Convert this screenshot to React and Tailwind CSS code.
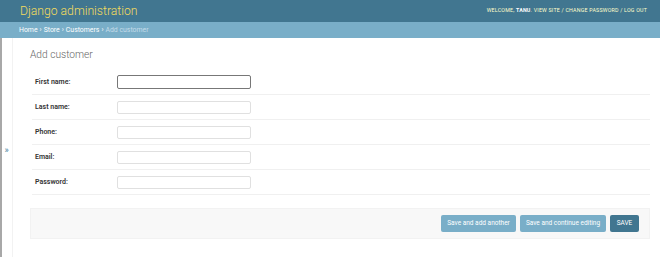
const fields = ["First name:", "Last name:", "Phone:", "Email:", "Password:"];

export default function App() {
  return (
    <div className="w-[660px] h-[257px] bg-white overflow-hidden font-['Roboto','Liberation_Sans',sans-serif] flex flex-col">
      <header className="h-[22px] shrink-0 bg-[#417690] flex items-center justify-between pl-[20px] pr-[13px]">
        <h1 className="text-[12.2px] font-light text-[#f5dd5d] leading-none">
          Django administration
        </h1>
        <div className="text-[5.3px] tracking-[0.2px] uppercase text-[#ffffcc] leading-none">
          Welcome, <strong className="font-bold text-white">Tanu</strong>.{" "}
          <span>View site</span> / <span>Change password</span> / <span>Log out</span>
        </div>
      </header>

      <div className="h-[16px] shrink-0 bg-[#79aec8] flex items-center pl-[19px] text-[6.9px] text-white leading-none">
        <span>Home</span>
        <span className="mx-[2px]">›</span>
        <span>Store</span>
        <span className="mx-[2px]">›</span>
        <span>Customers</span>
        <span className="mx-[2px]">›</span>
        <span className="text-[#c4dce8]">Add customer</span>
      </div>

      <div className="flex flex-1">
        <div className="w-[2px] bg-[#a8a8a8] shrink-0" />
        <div className="w-[11px] shrink-0 border-r border-[#f2f2f2] flex items-center justify-center pt-[7px] pr-[1px] text-[9px] text-[#447e9b]">
          »
        </div>

        <main className="flex-1 pl-[17px] pr-[10px]">
          <h2 className="text-[10.2px] font-light text-[#666] mt-[10px] mb-[8px] leading-[14px]">
            Add customer
          </h2>

          <div className="flex flex-col pl-[2px]">
            {fields.map((label, i) => (
              <div
                key={label}
                className="h-[25px] flex items-center border-b border-[#f0f0f0] pl-[3px]"
              >
                <label className="w-[82px] text-[7px] font-semibold text-[#333]">
                  {label}
                </label>
                <input
                  className={
                    i === 0
                      ? "w-[134px] h-[14px] rounded-[2px] border-[1.5px] border-[#777] bg-white outline-none"
                      : "w-[134px] h-[13px] rounded-[2px] border border-[#e0e0e0] bg-white outline-none"
                  }
                />
              </div>
            ))}
          </div>

          <div className="mt-[13px] h-[31px] bg-[#f8f8f8] border border-[#f2f2f2] flex items-center justify-end gap-[4px] pr-[10px]">
            <button className="h-[17px] w-[75px] rounded-[2px] bg-[#79aec8] text-white text-[6.5px]">
              Save and add another
            </button>
            <button className="h-[17px] w-[86px] rounded-[2px] bg-[#79aec8] text-white text-[6.5px]">
              Save and continue editing
            </button>
            <button className="h-[17px] w-[29px] rounded-[2px] bg-[#417690] text-white text-[6.5px] uppercase">
              Save
            </button>
          </div>
        </main>
      </div>
    </div>
  );
}
